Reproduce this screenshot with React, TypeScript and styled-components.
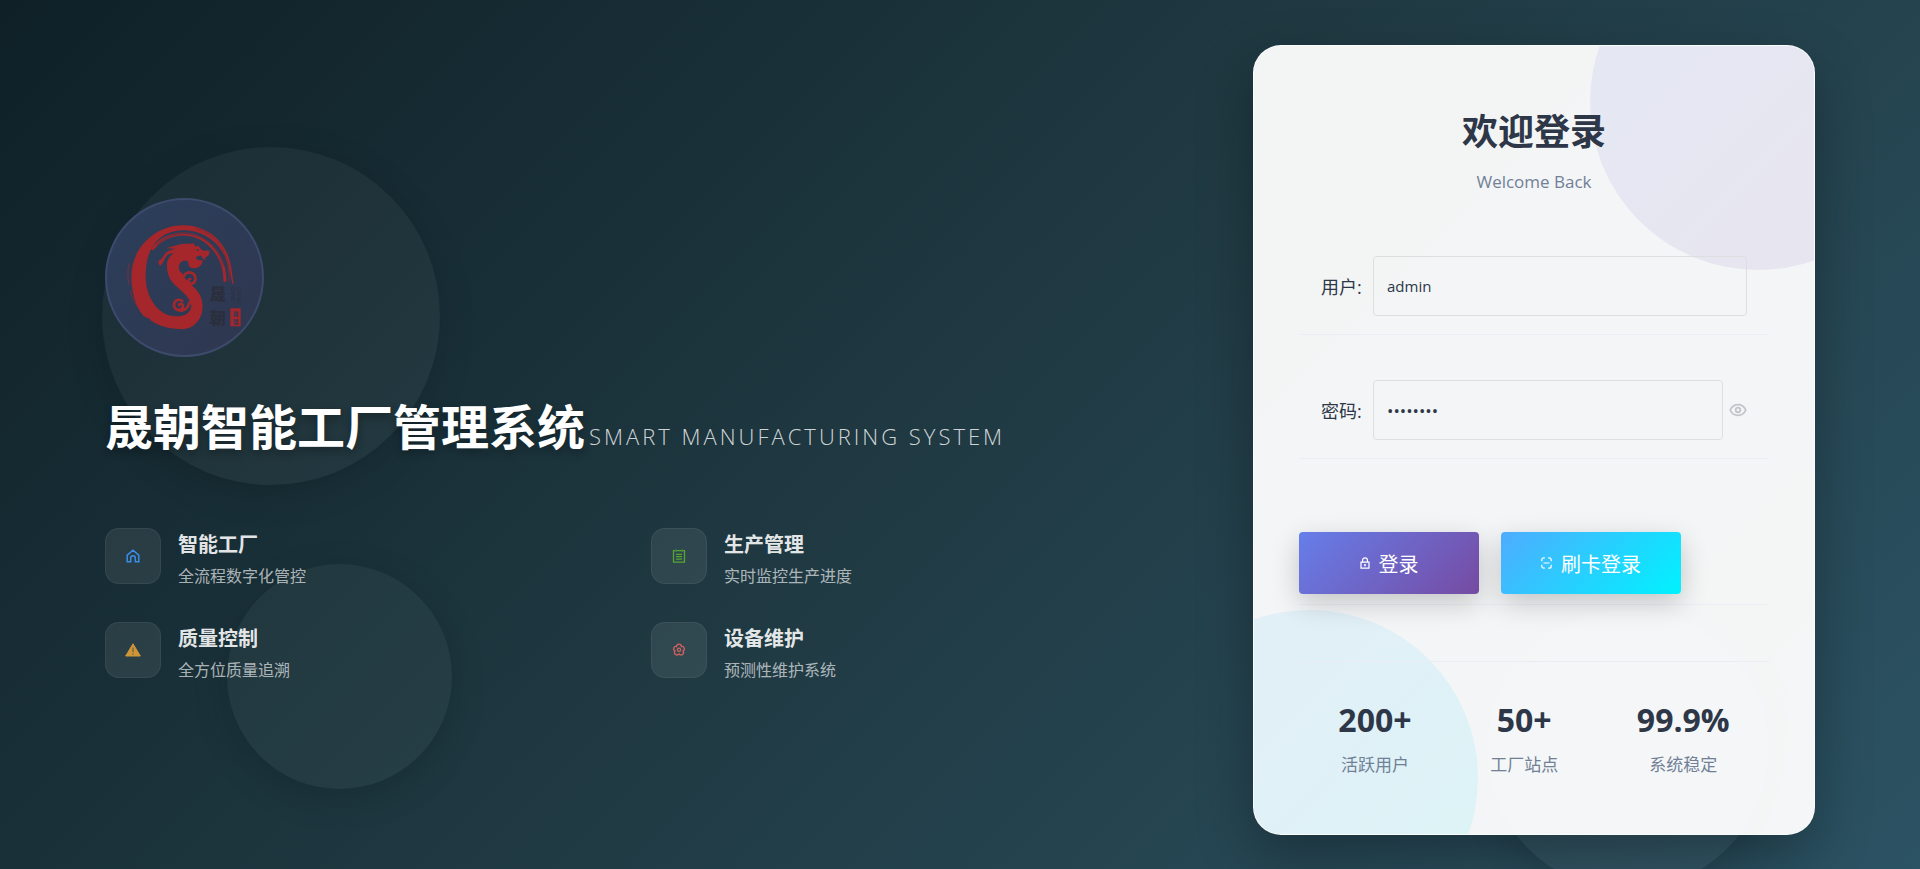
import React, { useState } from 'react';
import styled, { createGlobalStyle } from 'styled-components';

const GlobalStyle = createGlobalStyle`
  *, *::before, *::after { box-sizing: border-box; }
  html { scrollbar-width: none; }
  body {
    margin: 0;
    font-family: "Open Sans", "Noto Sans CJK SC", sans-serif;
    font-size: 16px;
    color: #2d3748;
  }
`;

const Page = styled.div`
  position: relative;
  overflow: hidden;
  min-height: 100vh;
  padding: 45px 105px;
  background: linear-gradient(135deg, #0f2027 0%, #203a43 50%, #2c5364 100%);
`;

const Bubble = styled.div<{ $size: number; $left: string; $top: string }>`
  position: absolute;
  width: ${(p) => p.$size}px;
  height: ${(p) => p.$size}px;
  left: ${(p) => p.$left};
  top: ${(p) => p.$top};
  border-radius: 50%;
  background: rgba(255, 255, 255, 0.04);
  box-shadow: 0 9px 36px rgba(0, 0, 0, 0.15);
`;

const Layout = styled.main`
  position: relative;
  display: grid;
  grid-template-columns: minmax(0, 1fr) 562px;
  gap: 90px;
  align-items: center;
`;

const Brand = styled.section`
  display: flex;
  flex-direction: column;
`;

const LogoDisc = styled.div`
  display: flex;
  align-items: center;
  justify-content: center;
  width: 159px;
  height: 159px;
  margin-bottom: 36px;
  border: 2px solid #3d4a6c;
  border-radius: 50%;
  background: linear-gradient(135deg, #2b3f5b, #30364f);
  overflow: hidden;
`;

const TitleRow = styled.div`
  display: flex;
  align-items: baseline;
  gap: 4px;
  margin-bottom: 67px;
  white-space: nowrap;
`;

const Title = styled.h1`
  margin: 0;
  font-size: 48px;
  line-height: 68px;
  font-weight: 700;
  color: #fff;
  text-shadow: 0 4px 8px rgba(0, 0, 0, 0.3);
`;

const Tagline = styled.span`
  font-size: 22px;
  font-weight: 300;
  letter-spacing: 3px;
  color: rgba(255, 255, 255, 0.8);
`;

const Features = styled.ul`
  display: grid;
  grid-template-columns: 1fr 1fr;
  gap: 34px;
  margin: 0;
  padding: 0;
  list-style: none;
`;

const Feature = styled.li`
  display: flex;
  gap: 17px;
  height: 60px;
`;

const FeatureIcon = styled.div`
  display: flex;
  align-items: center;
  justify-content: center;
  width: 56px;
  height: 56px;
  border: 1px solid rgba(255, 255, 255, 0.06);
  border-radius: 14px;
  background: rgba(255, 255, 255, 0.08);
`;

const FeatureName = styled.h2`
  margin: 2px 0;
  font-size: 20px;
  line-height: 30px;
  font-weight: 700;
  color: rgba(255, 255, 255, 0.9);
`;

const FeatureText = styled.p`
  margin: 0;
  font-size: 16px;
  line-height: 28px;
  color: rgba(255, 255, 255, 0.65);
`;

const Card = styled.section`
  position: relative;
  overflow: hidden;
  min-height: 790px;
  padding: 56px 45px 45px;
  border: 1px solid rgba(255, 255, 255, 0.6);
  border-radius: 28px;
  background: rgba(255, 255, 255, 0.95);
`;

const CardShadow = styled.div`
  border-radius: 28px;
  box-shadow: 0 22px 56px rgba(0, 0, 0, 0.3);
`;

const Glow = styled.div<{ $corner: 'top' | 'bottom' }>`
  position: absolute;
  width: 60%;
  aspect-ratio: 1;
  ${(p) => (p.$corner === 'top' ? 'top: -112px; right: -20%;' : 'bottom: -112px; left: -20%;')}
  border-radius: 50%;
  opacity: 0.1;
  background: ${(p) =>
    p.$corner === 'top'
      ? 'linear-gradient(135deg, #667eea, #764ba2)'
      : 'linear-gradient(135deg, #4facfe, #00f2fe)'};
`;

const CardBody = styled.div`
  position: relative;
`;

const CardHeader = styled.header`
  text-align: center;
  margin-bottom: 40px;
`;

const Welcome = styled.h2`
  margin: 0 0 8px;
  font-size: 36px;
  line-height: 60px;
  font-weight: 700;
`;

const WelcomeSub = styled.p`
  margin: 0;
  font-size: 17px;
  line-height: 24px;
  color: #718096;
`;

const Field = styled.div`
  display: flex;
  align-items: center;
  padding: 22px 22px 18px;
  margin-bottom: 23px;
  border-bottom: 1px solid #ebedf5;
`;

const FieldLabel = styled.label`
  width: 52px;
  font-size: 18px;
  white-space: nowrap;
`;

const FieldInput = styled.input`
  flex: 1;
  min-width: 0;
  height: 60px;
  padding: 0 13px;
  border: 1px solid #dcdfe0;
  border-radius: 4px;
  background: transparent;
  font: inherit;
  font-size: ${(p) => (p.type === 'password' ? 17 : 15)}px;
  color: #2d3748;
  outline: none;
`;

const EyeButton = styled.button`
  display: flex;
  margin-left: 6px;
  padding: 0;
  border: 0;
  background: none;
  color: #c0c4cc;
  cursor: pointer;
`;

const Actions = styled.div`
  display: flex;
  gap: 22px;
  padding-top: 50px;
  height: 123px;
  border-bottom: 1px solid #ebedf5;
`;

const ActionButton = styled.button<{ $tone: 'violet' | 'cyan' }>`
  display: flex;
  align-items: center;
  justify-content: center;
  gap: 9px;
  width: 180px;
  height: 62px;
  padding: 0;
  border: 0;
  border-radius: 4px;
  font: inherit;
  font-size: 20px;
  color: #fff;
  cursor: pointer;
  background: ${(p) =>
    p.$tone === 'violet'
      ? 'linear-gradient(135deg, #667eea, #764ba2)'
      : 'linear-gradient(135deg, #4facfe, #00f2fe)'};
  box-shadow: 0 9px 28px rgba(0, 0, 0, 0.2);
`;

const Stats = styled.dl`
  display: flex;
  justify-content: space-around;
  margin: 56px 0 0;
  padding-top: 34px;
  border-top: 1px solid #ebedf5;
`;

const Stat = styled.div`
  display: flex;
  flex-direction: column-reverse;
  align-items: center;
`;

const StatLabel = styled.dt`
  font-size: 17px;
  line-height: 26px;
  color: #718096;
`;

const StatValue = styled.dd`
  margin: 0 0 8px;
  font-size: 32px;
  line-height: 48px;
  font-weight: 700;
`;

const DragonLogo = () => (
  <svg width="116" height="110" viewBox="0 0 348 330" role="img" aria-label="晟朝">
    <path
      fill="#a5262b"
      d="M165 319C110 316 75 300 68 287L50 280C25 250 13 205 13 160 13 75 85 7 168 7c77 0 132 53 144 123l8 52h-4l-10-47C290 65 235 22 168 22c-38 1-73 16-94 54-14 24-18 54-18 84 0 65 39 122 94 120 25-1 42-12 43-32-1-20-28-43-45-58-20-18-30-40-28-70 2-12 10-22 20-30l-12 2c-16 6-16 28-28 36-6-2-7-10-4-16 8 0 12-14 22-24 8-6 20-10 28-11l-28-1c14-6 30-8 42-12 16-4 30 0 40-4l4 10 10-2 8 10c10 10 18 2 25 6 1 12-3 16-13 19l2 9-8-4-6-10c-10 0-16 2-14 10 8 6 14 2 19 4-1 16-13 24-25 24-14 0-20-10-18-20-10-8-27 0-28 14-2 12 4 18 10 22 8 20 30 34 42 48 16 18 21 40 18 62-4 30-28 57-61 57z"
    />
    <g fill="none" stroke="#a5262b" strokeLinecap="round">
      <path strokeWidth="9" strokeLinecap="butt" d="M75 80C100 48 136 32 170 33c70 2 124 62 124 143" />
      <path strokeWidth="2" d="M286 78c14 28 22 60 20 96M6 122c-5 22-4 40-1 62M10 204c4 18 12 34 24 50" />
      <path strokeWidth="8" d="M174 178c-14-24 10-36 24-26 13 10 7 31-6 30-10 0-11-13-2-14" />
      <path strokeWidth="8" d="M166 234c-12-9-26 0-25 14 2 16 26 17 27 2 0-8-9-9-12-4M150 260c14 8 34-2 38-22" />
    </g>
    <path d="M88 68c26-28 62-40 94-36 54 6 94 44 106 96" fill="none" stroke="#2d3a57" strokeWidth="2" />
    <path d="M206 16c50 14 88 54 100 116" fill="none" stroke="#2d3a57" strokeWidth="1" />
    <circle cx="212" cy="81" r="3" fill="#2d3a57" />
    <g fill="#2b2e3c" fontFamily="'Noto Sans CJK SC', sans-serif" fontWeight="900" fontSize="48">
      <text x="248" y="230">晟</text>
      <text x="248" y="302">朝</text>
    </g>
    <g fill="#2b2e3c" fontFamily="'Liberation Sans', sans-serif" fontSize="14">
      <text transform="translate(311 192) rotate(90)">CHAO</text>
      <text transform="translate(329 192) rotate(90)">CHENG</text>
    </g>
    <rect x="310" y="256" width="31" height="54" rx="3" fill="#a5262b" />
    <g fill="#2d3a57" fontFamily="'Noto Sans CJK SC', sans-serif" fontWeight="700" fontSize="17">
      <text x="317" y="278">珠</text>
      <text x="317" y="303">璨</text>
    </g>
  </svg>
);

const HomeIcon = () => (
  <svg width="14" height="14" viewBox="0 0 14 14" fill="none" stroke="#3a8ee6" strokeWidth="1.5" aria-hidden="true">
    <path d="M1.200 12.700V6.200L7 1.200l5.800 5v6.500H9.300V9a2.300 2.300 0 0 0-4.600 0v3.700z" />
  </svg>
);

const ListIcon = () => (
  <svg width="14" height="14" viewBox="0 0 14 14" fill="none" stroke="#55a532" strokeWidth="1.3" aria-hidden="true">
    <path d="M3 1.700H1.500v11.500h11V1.700H11M5 1.700h4M4 .5v2.200M10 .5v2.200M4 5.300h6M4 7.700h6M4 10.200h6" />
  </svg>
);

const WarningIcon = () => (
  <svg width="16" height="14" viewBox="0 0 16 14" aria-hidden="true">
    <path d="M8 .8 15.300 13H.7z" fill="#cf9638" stroke="#cf9638" strokeLinejoin="round" />
    <path d="M8 4.500v4.700M8 10.400v1.400" stroke="#5d5540" strokeWidth="1.100" />
  </svg>
);

const FlowerIcon = () => (
  <svg width="14" height="14" viewBox="0 0 14 14" fill="none" stroke="#d0605f" strokeWidth="1.300" aria-hidden="true">
    <path d="M4.600 3.600a2.400 2.400 0 0 1 4.800 0 2.300 2.300 0 0 1 1.600 4.300 2.300 2.300 0 0 1-4 3.100 2.300 2.300 0 0 1-4-3.100 2.300 2.300 0 0 1 1.600-4.300z" />
    <circle cx="7" cy="6.800" r="1.600" />
  </svg>
);

const EyeIcon = () => (
  <svg width="18" height="14" viewBox="0 0 18 14" fill="none" stroke="currentColor" strokeWidth="1.800" aria-hidden="true">
    <path d="M1.200 7C4.500-.2 13.500-.2 16.800 7 13.500 14.200 4.500 14.200 1.200 7z" />
    <circle cx="9" cy="7" r="2.300" />
  </svg>
);

const LockIcon = () => (
  <svg width="10" height="12" viewBox="0 0 10 12" fill="none" stroke="#fff" strokeWidth="1.200" aria-hidden="true">
    <path d="M1 5.200h8v6H1zM2.600 5V3.200a2.400 2.400 0 0 1 4.800 0V5M5 7v2.200M4 8h2" />
  </svg>
);

const ScanIcon = () => (
  <svg width="11" height="12" viewBox="0 0 11 12" fill="none" stroke="#fff" strokeWidth="1.200" aria-hidden="true">
    <path d="M.8 4.300V2.800a2 2 0 0 1 2-2h1M7.200.8h1a2 2 0 0 1 2 2v1.500M.8 7.700v1.500a2 2 0 0 0 2 2h1M7.200 11.200h1a2 2 0 0 0 2-2V7.700M2.500 6h6" />
  </svg>
);

const features = [
  { name: '智能工厂', text: '全流程数字化管控', Icon: HomeIcon },
  { name: '生产管理', text: '实时监控生产进度', Icon: ListIcon },
  { name: '质量控制', text: '全方位质量追溯', Icon: WarningIcon },
  { name: '设备维护', text: '预测性维护系统', Icon: FlowerIcon },
];

const stats = [
  { value: '200+', label: '活跃用户' },
  { value: '50+', label: '工厂站点' },
  { value: '99.9%', label: '系统稳定' },
];

export default function App() {
  const [user, setUser] = useState('admin');
  const [password, setPassword] = useState('password');
  const [visible, setVisible] = useState(false);

  return (
    <>
      <GlobalStyle />
      <Page>
        <Bubble $size={338} $left="102px" $top="147px" />
        <Bubble $size={225} $left="227px" $top="564px" />
        <Bubble $size={281} $left="calc(100% - 433px)" $top="609px" />
        <Layout>
          <Brand>
            <LogoDisc>
              <DragonLogo />
            </LogoDisc>
            <TitleRow>
              <Title>晟朝智能工厂管理系统</Title>
              <Tagline>SMART MANUFACTURING SYSTEM</Tagline>
            </TitleRow>
            <Features>
              {features.map(({ name, text, Icon }) => (
                <Feature key={name}>
                  <FeatureIcon>
                    <Icon />
                  </FeatureIcon>
                  <div>
                    <FeatureName>{name}</FeatureName>
                    <FeatureText>{text}</FeatureText>
                  </div>
                </Feature>
              ))}
            </Features>
          </Brand>
          <CardShadow>
            <Card>
              <Glow $corner="top" />
              <Glow $corner="bottom" />
              <CardBody>
                <CardHeader>
                  <Welcome>欢迎登录</Welcome>
                  <WelcomeSub>Welcome Back</WelcomeSub>
                </CardHeader>
                <form onSubmit={(e) => e.preventDefault()}>
                  <Field>
                    <FieldLabel htmlFor="user">用户:</FieldLabel>
                    <FieldInput id="user" type="text" value={user} onChange={(e) => setUser(e.target.value)} />
                  </Field>
                  <Field>
                    <FieldLabel htmlFor="password">密码:</FieldLabel>
                    <FieldInput
                      id="password"
                      type={visible ? 'text' : 'password'}
                      value={password}
                      onChange={(e) => setPassword(e.target.value)}
                    />
                    <EyeButton type="button" aria-label="显示密码" onClick={() => setVisible(!visible)}>
                      <EyeIcon />
                    </EyeButton>
                  </Field>
                  <Actions>
                    <ActionButton type="submit" $tone="violet">
                      <LockIcon />
                      登录
                    </ActionButton>
                    <ActionButton type="button" $tone="cyan">
                      <ScanIcon />
                      刷卡登录
                    </ActionButton>
                  </Actions>
                </form>
                <Stats>
                  {stats.map((s) => (
                    <Stat key={s.label}>
                      <StatLabel>{s.label}</StatLabel>
                      <StatValue>{s.value}</StatValue>
                    </Stat>
                  ))}
                </Stats>
              </CardBody>
            </Card>
          </CardShadow>
        </Layout>
      </Page>
    </>
  );
}
